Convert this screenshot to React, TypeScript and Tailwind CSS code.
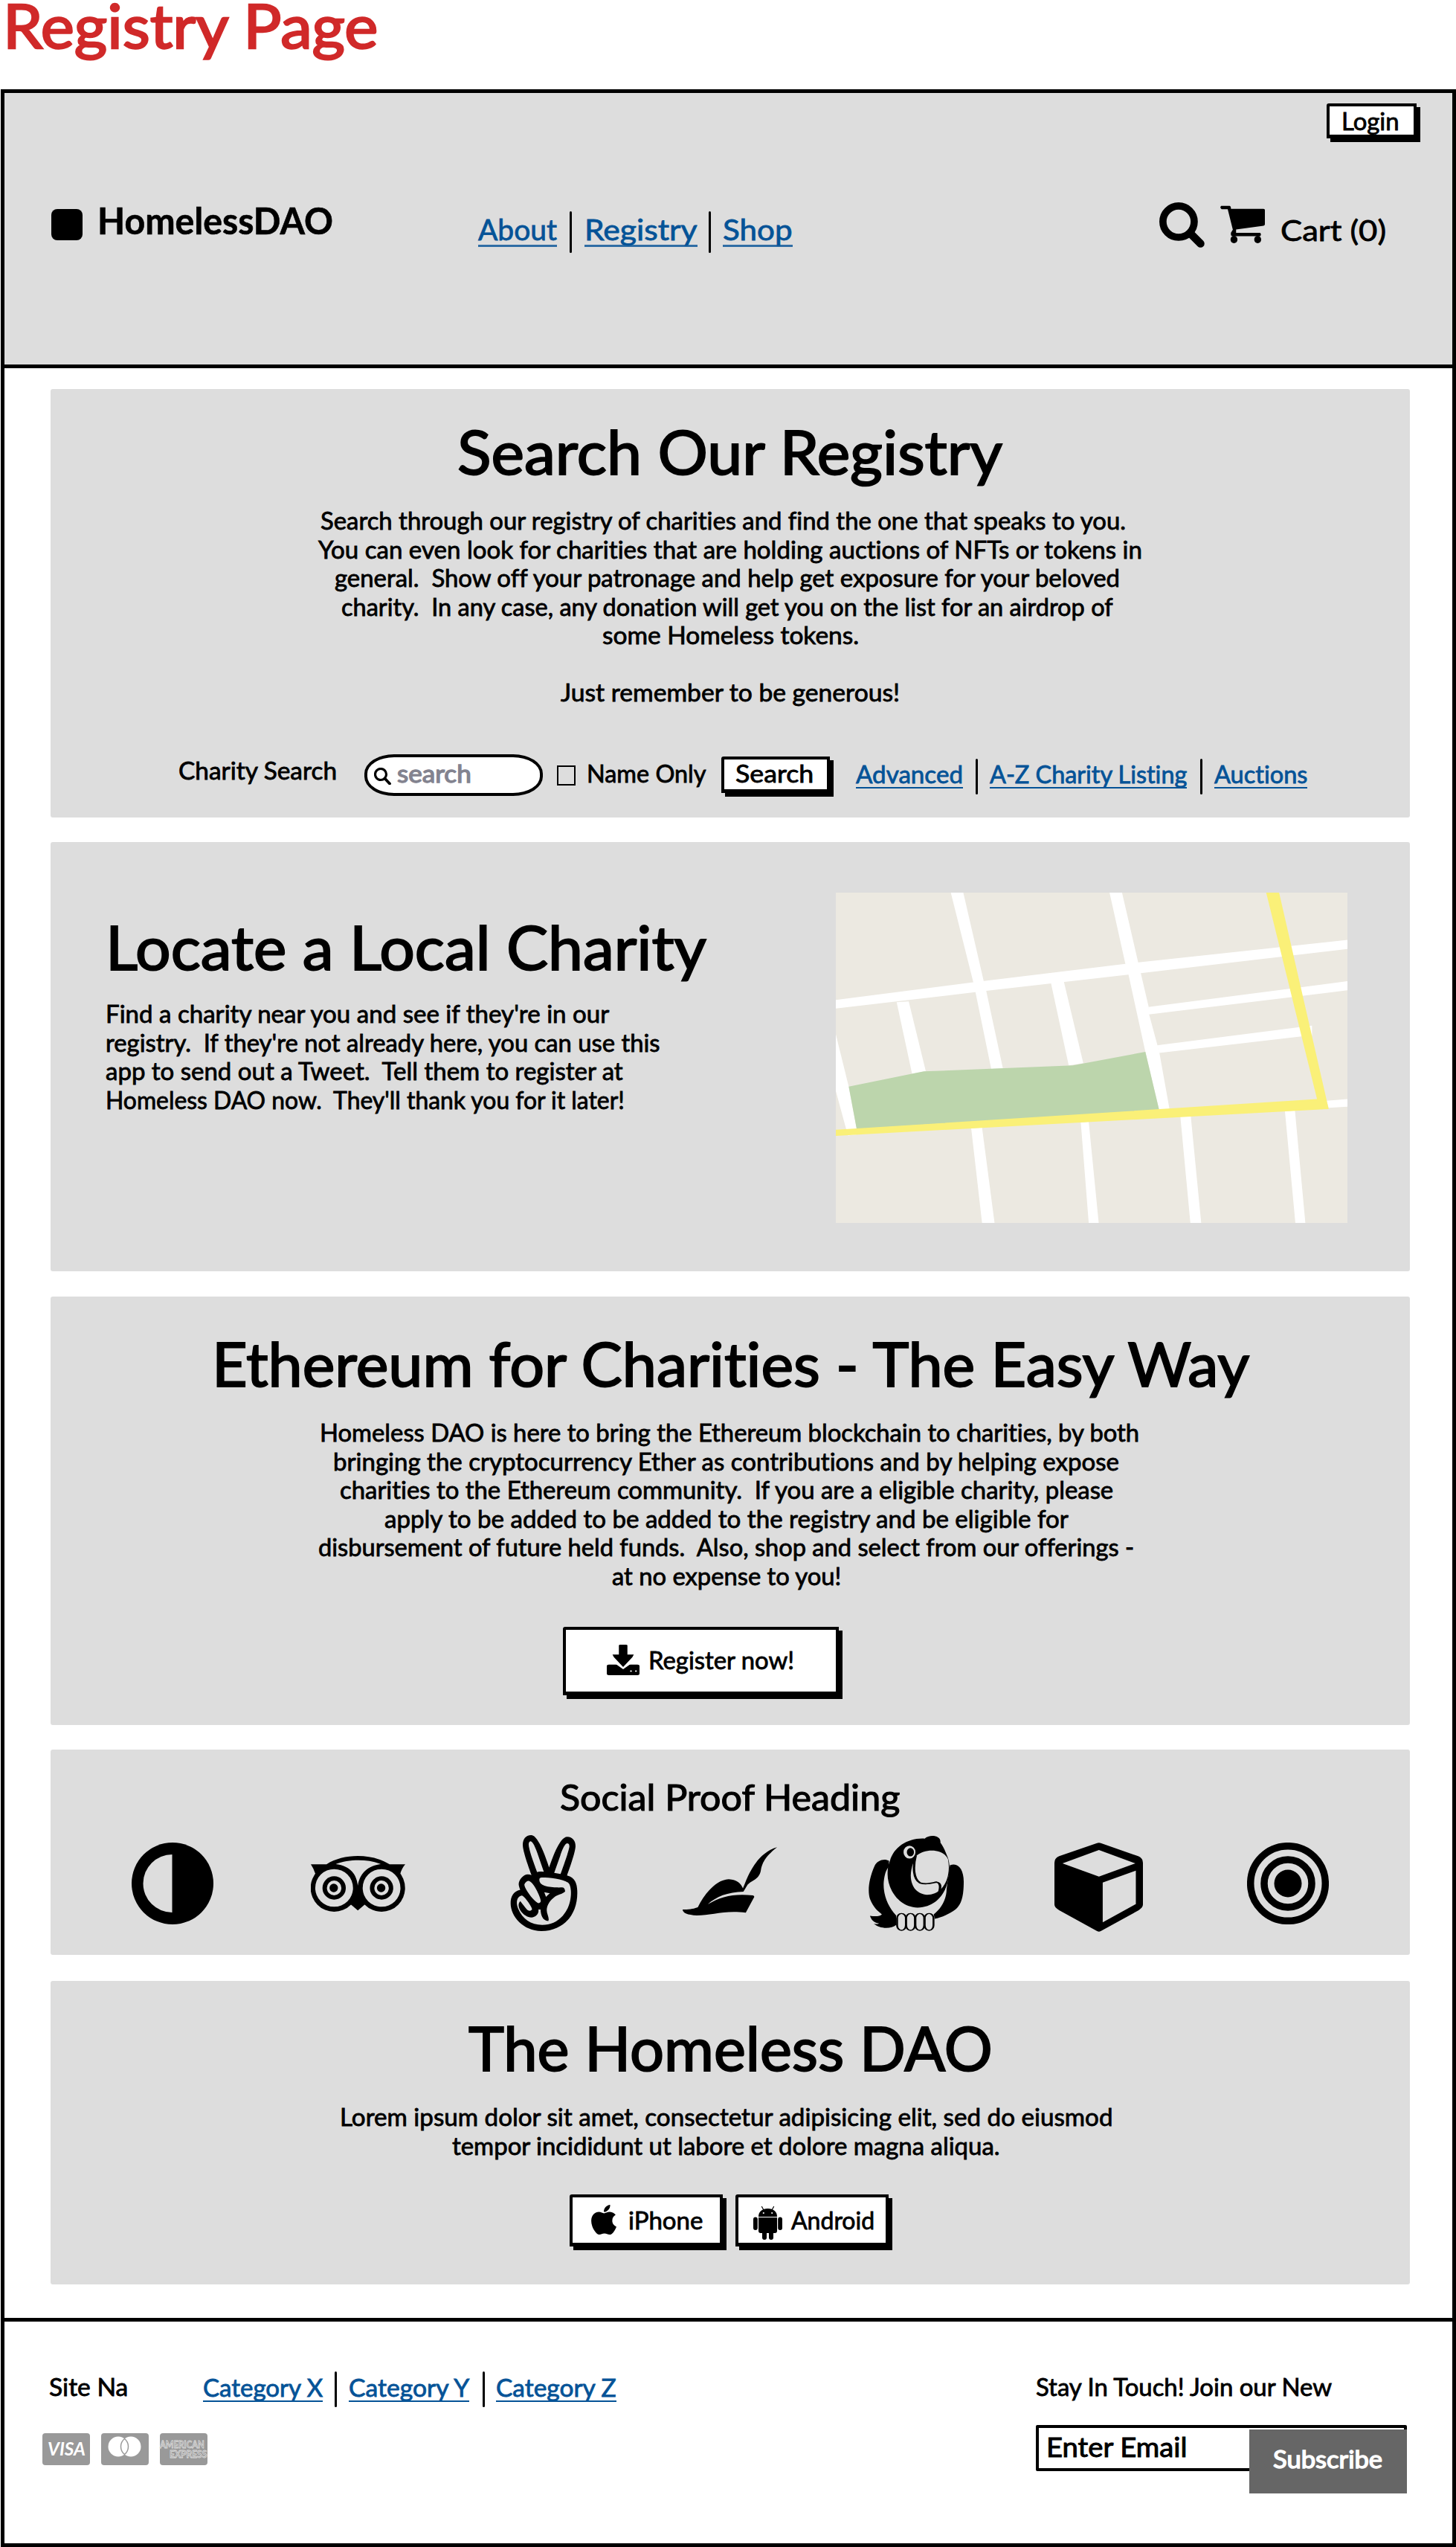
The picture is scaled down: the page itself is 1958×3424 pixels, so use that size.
import { useLayoutEffect, useRef, useState } from "react";
import type { ReactNode } from "react";
import { FaAngellist, FaApple } from "react-icons/fa";

/* A single line of text stretched to exactly fill the width of its box. */
function Fit({ className = "", children }: { className?: string; children: ReactNode }) {
  const box = useRef<HTMLSpanElement>(null);
  const text = useRef<HTMLSpanElement>(null);
  const [scale, setScale] = useState(1);
  useLayoutEffect(() => {
    if (box.current && text.current) {
      setScale(box.current.clientWidth / text.current.offsetWidth);
    }
  }, []);
  return (
    <span ref={box} className={"block shrink-0 whitespace-pre " + className}>
      <span ref={text} className="inline-block origin-left" style={{ transform: `scaleX(${scale})` }}>
        {children}
      </span>
    </span>
  );
}

const H1 = "text-[81px] leading-[96px] [-webkit-text-stroke:2px]";
const BODY = "text-[32px] leading-[38.5px] [-webkit-text-stroke:0.8px]";
const SMALL_LINK =
  "text-[32px] leading-[35px] [-webkit-text-stroke:0.8px] text-[#055397] border-b-2 border-[#055397]";
const NAV_LINK =
  "text-[39px] leading-[42px] [-webkit-text-stroke:0.8px] text-[#055397] border-b-[3px] border-[#055397]/80";

type Line = { t: string; c: string };

function Lines({ lines, className = "" }: { lines: Line[]; className?: string }) {
  return (
    <p className={BODY + " " + className}>
      {lines.map((l, i) => (
        <Fit key={i} className={l.c}>
          {l.t}
        </Fit>
      ))}
    </p>
  );
}

function Section({ className, children }: { className: string; children: ReactNode }) {
  return (
    <section className={"ml-[62px] w-[1828px] shrink-0 rounded-[3px] bg-[#dddddd] " + className}>{children}</section>
  );
}

function Sep({ className }: { className: string }) {
  return <span className={"w-[3px] shrink-0 rounded-full bg-black " + className} />;
}

function Button({ className, children }: { className: string; children: ReactNode }) {
  return (
    <button
      className={
        "flex shrink-0 items-start rounded-tl-[3px] border-[4px] border-b-[5px] border-black bg-white text-left shadow-[5px_5px_0_0_#000] " +
        className
      }
    >
      {children}
    </button>
  );
}

function MapPicture() {
  return (
    <svg className="h-[444px] w-[688px] shrink-0" viewBox="79 105 1228 1160" preserveAspectRatio="none">
      <rect x="79" y="105" width="1228" height="1160" fill="#ece9e1" />
      <g fill="#fff">
        <polygon points="355,105 385,105 434,416 440,450 480,722 452,724 415,460 409,420" />
        <polygon points="736,105 766,105 805,352 811,388 830,507 831,533 851,641 856,670 880,866 855,868 822,664 781,390 774,355" />
        <polygon points="79,482 409,420 774,355 1307,271 1307,303 811,388 440,450 79,512" />
        <polygon points="225,490 254,487 295,733 262,741" />
        <polygon points="595,420 626,415 673,704 638,712" />
        <polygon points="829,507 1307,416 1307,448 830,533" />
        <polygon points="850,641 1193,577 1222,572 1222,606 1197,610 855,668" />
        <polygon points="79,603 110,786 129,933 128,955 108,958 79,802" />
        <polygon points="404,933 430,930 460,1265 430,1265" />
        <polygon points="667,912 686,910 710,1265 686,1265" />
        <polygon points="906,892 931,890 956,1265 930,1265" />
        <polygon points="1157,873 1181,870 1206,1265 1182,1265" />
        <polygon points="1257,836 1307,830 1307,857 1262,861" />
      </g>
      <polygon fill="#bcd5ac" points="110,786 290,733 648,712 822,664 855,868 129,935" />
      <polygon fill="#faf078" points="1112,105 1143,105 1262,865 79,959 79,938 1234,830" />
    </svg>
  );
}

function SearchIcon({ className }: { className: string }) {
  return (
    <svg className={className} viewBox="0 0 60 60" fill="none" stroke="#000">
      <circle cx="25.5" cy="25.5" r="20.7" strokeWidth="9.5" />
      <path d="M42 42L54.5 54.5" strokeWidth="10.5" strokeLinecap="round" />
    </svg>
  );
}

function CartIcon() {
  return (
    <svg className="ml-[21px] mt-[151px] h-[51px] w-[60px] shrink-0" viewBox="1062 529 96 154" preserveAspectRatio="none">
      <path d="M1064 531H1082Q1085 532 1085 543H1155Q1158 543 1158 548V606Q1158 610 1155 612L1096 627V641H1148Q1151 648 1148 654H1088Q1084 654 1085 640L1089 628L1078 545H1065Q1060 538 1064 531Z" />
      <ellipse cx="1091.500" cy="668" rx="7.500" ry="15" />
      <ellipse cx="1142.500" cy="668" rx="7.500" ry="15" />
    </svg>
  );
}

function DownloadIcon() {
  return (
    <svg className="ml-[55px] mt-[20px] h-[41px] w-[44px] shrink-0" viewBox="592 1272 46 112" preserveAspectRatio="none">
      <rect x="592" y="1345" width="46" height="39" rx="3" ry="6" />
      <path d="M602 1338L615 1362L628 1338Z" fill="#fff" />
      <path d="M609 1275Q609 1272 611 1272H619Q621 1272 621 1275V1308H630L628 1318L615 1354L602 1318L600 1308H609Z" />
      <ellipse cx="626" cy="1369" rx="1.300" ry="3" fill="#fff" />
      <ellipse cx="633" cy="1369" rx="1.300" ry="3" fill="#fff" />
    </svg>
  );
}

function AndroidIcon() {
  return (
    <svg className="ml-[20px] mt-[12px] h-[45px] w-[39px] shrink-0" viewBox="0 0 39 45">
      <path d="M11.500 0.500L14 5M27.500 0.500L25 5" stroke="#000" strokeWidth="1.200" strokeLinecap="round" />
      <path d="M7 14C7 7 12 3 19.500 3S32 7 32 14Z" />
      <circle cx="13.800" cy="9" r="1.100" fill="#fff" />
      <circle cx="25.200" cy="9" r="1.100" fill="#fff" />
      <path d="M7 15H32V33Q32 36 29 36H10Q7 36 7 33Z" />
      <rect x="0" y="14.500" width="5.800" height="17.500" rx="2.900" />
      <rect x="33.200" y="14.500" width="5.800" height="17.500" rx="2.900" />
      <rect x="12" y="30" width="6" height="15" rx="3" />
      <rect x="21" y="30" width="6" height="15" rx="3" />
    </svg>
  );
}

function HalfCircleIcon() {
  return (
    <svg className="ml-[109px] mt-[10px] h-[110px] w-[110px] shrink-0" viewBox="0 0 110 110">
      <circle cx="55" cy="55" r="55" />
      <path d="M54.500 16A39 39 0 0 0 54.500 94Z" fill="#ddd" />
    </svg>
  );
}

function OwlIcon() {
  return (
    <svg className="ml-[131px] mt-[28px] h-[75px] w-[127px] shrink-0" viewBox="531 345 235 225" preserveAspectRatio="none">
      <path d="M531 379L570 379C612 334 684 334 727 379L766 379Q757 395 753 420L648 565L543 420Q538 395 531 379Z" />
      {[589, 707].map((x) => (
        <g key={x}>
          <ellipse cx={x} cy="474" rx="58.500" ry="96" />
          <ellipse cx={x} cy="474" rx="47" ry="76" fill="#ddd" />
          <ellipse cx={x} cy="474" rx="29" ry="47" />
          <ellipse cx={x} cy="474" rx="18" ry="30" fill="#ddd" />
          <ellipse cx={x - 1} cy="474" rx="10.500" ry="17" />
        </g>
      ))}
      <path d="M593 378C625 357 675 357 705 378C670 385 652 420 648 465C645 420 630 385 593 378Z" fill="#ddd" />
    </svg>
  );
}

function HatIcon() {
  return (
    <svg className="ml-[129px] mt-[16px] h-[92px] w-[127px] shrink-0" viewBox="60 308 199 277" preserveAspectRatio="none">
      <path d="M92 552C105 500 130 440 157 438C175 440 183 455 187 475C195 440 212 335 259 309C232 350 228 375 225 400C222 440 208 438 197 460L188 489C155 490 130 510 113 540C140 508 170 495 208 504Q211 505 211 510L193 574C150 562 120 585 90 585C70 583 60 575 60 561C75 562 85 557 92 552Z" />
    </svg>
  );
}

function ParrotIcon() {
  return (
    <svg className="ml-[123px] h-[129px] w-[128px] shrink-0" viewBox="452 262 200 388" preserveAspectRatio="none">
      <path d="M495 366C485 354 470 365 465 385C452 440 450 490 455 520C462 555 472 570 480 582Q474 594 455 588C458 605 463 615 474 619Q470 624 463 620C475 642 500 642 510 625L510 587C492 550 482 500 484 450C486 415 490 400 494 392Z" />
      <path d="M497 366C505 310 535 272 570 276C580 258 605 262 603 292C608 305 612 320 618 350C622 370 624 400 620 430C618 480 600 553 555 555C515 553 492 480 492 420C492 395 494 380 497 366Z" />
      <path d="M623 384C640 370 652 400 652 450C652 520 645 545 635 562C622 580 605 597 591 600L589 582C605 560 616 520 616 480Z" />
      <path d="M553 345C570 315 610 315 619 360C626 430 610 503 575 503C545 500 533 440 546 375Z" fill="#ddd" />
      <path d="M551 345C545 390 546 440 560 455C573 463 585 455 595 452C604 455 604 470 600 496" fill="none" stroke="#000" strokeWidth="5" />
      <ellipse cx="538" cy="331" rx="12.500" ry="26" fill="#ddd" />
      <ellipse cx="540" cy="331" rx="7.500" ry="17" />
      {[512, 531, 550.5, 570].map((x) => (
        <rect key={x} x={x} y="579" width="18.500" height="68" rx="9" ry="20" fill="#ddd" stroke="#000" strokeWidth="4" />
      ))}
    </svg>
  );
}

function CubeIcon() {
  return (
    <svg className="ml-[122px] mt-[10px] h-[120px] w-[119px] shrink-0" viewBox="843 290 187 360" preserveAspectRatio="none">
      <path d="M933 292Q937 289 941 292L1020 345Q1030 353 1030 372V540Q1030 552 1021 563L941 647Q937 651 933 647L853 563Q843 552 843 540V372Q843 353 853 345Z" />
      <path d="M937 320L1014 374L937 427L860 374ZM945 451L1015 403V538L945 612Z" fill="#ddd" />
    </svg>
  );
}

function TargetIcon() {
  return (
    <svg className="ml-[140px] mt-[10px] h-[110px] w-[110px] shrink-0" viewBox="0 0 110 110">
      <circle cx="55" cy="55" r="50.300" fill="none" stroke="#000" strokeWidth="9.500" />
      <circle cx="55" cy="55" r="32" fill="none" stroke="#000" strokeWidth="9.500" />
      <circle cx="55" cy="55" r="18.500" />
    </svg>
  );
}

const searchLines: Line[] = [
  { t: "Search through our registry of charities and find the one that speaks to you.", c: "ml-[363px] w-[1083px]" },
  { t: "You can even look for charities that are holding auctions of NFTs or tokens in", c: "ml-[360px] w-[1108px]" },
  { t: "general.  Show off your patronage and help get exposure for your beloved", c: "ml-[382px] w-[1056px]" },
  { t: "charity.  In any case, any donation will get you on the list for an airdrop of", c: "ml-[391px] w-[1038px]" },
  { t: "some Homeless tokens.", c: "ml-[742px] w-[345px]" },
  { t: "Just remember to be generous!", c: "ml-[686px] w-[456px] mt-[38.5px]" },
];

const locateLines: Line[] = [
  { t: "Find a charity near you and see if they're in our", c: "w-[677px]" },
  { t: "registry.  If they're not already here, you can use this", c: "w-[746px]" },
  { t: "app to send out a Tweet.  Tell them to register at", c: "w-[696px]" },
  { t: "Homeless DAO now.  They'll thank you for it later!", c: "w-[698px]" },
];

const ethereumLines: Line[] = [
  { t: "Homeless DAO is here to bring the Ethereum blockchain to charities, by both", c: "ml-[362px] w-[1102px]" },
  { t: "bringing the cryptocurrency Ether as contributions and by helping expose", c: "ml-[380px] w-[1057px]" },
  { t: "charities to the Ethereum community.  If you are a eligible charity, please", c: "ml-[389px] w-[1040px]" },
  { t: "apply to be added to be added to the registry and be eligible for", c: "ml-[449px] w-[920px]" },
  { t: "disbursement of future held funds.  Also, shop and select from our offerings -", c: "ml-[360px] w-[1097px]" },
  { t: "at no expense to you!", c: "ml-[755px] w-[308px]" },
];

const loremLines: Line[] = [
  { t: "Lorem ipsum dolor sit amet, consectetur adipisicing elit, sed do eiusmod", c: "ml-[389px] w-[1040px]" },
  { t: "tempor incididunt ut labore et dolore magna aliqua.", c: "ml-[540px] w-[737px]" },
];

function Header() {
  return (
    <header className="h-[375px] shrink-0 border-y-[5px] border-black bg-[#dddddd]">
      <div className="flex h-0">
        <Button className="ml-[1778px] mt-[14px] h-[47px] w-[121px]">
          <Fit className="ml-[16px] mt-px w-[78px] text-[32px] leading-[38px] [-webkit-text-stroke:0.8px]">Login</Fit>
        </Button>
      </div>
      <div className="flex items-start">
        <span className="ml-[63px] mt-[156px] size-[42px] shrink-0 rounded-[8px] bg-black" />
        <Fit className="ml-[20px] mt-[142px] w-[317px] text-[49px] font-bold leading-[58px] [-webkit-text-stroke:0.6px]">
          HomelessDAO
        </Fit>
        <nav className="ml-[195px] mt-[159px] flex items-start">
          <Fit className={NAV_LINK + " mt-[3px] w-[106px]"}>About</Fit>
          <Sep className="ml-[17px] h-[56px]" />
          <Fit className={NAV_LINK + " ml-[17px] mt-[3px] w-[152px]"}>Registry</Fit>
          <Sep className="ml-[15px] h-[56px]" />
          <Fit className={NAV_LINK + " ml-[16px] mt-[3px] w-[94px]"}>Shop</Fit>
        </nav>
        <SearchIcon className="ml-[493px] mt-[147px] size-[61px] shrink-0" />
        <CartIcon />
        <Fit className="ml-[21px] mt-[163px] w-[142px] text-[39px] leading-[42px] [-webkit-text-stroke:0.8px]">Cart (0)</Fit>
      </div>
    </header>
  );
}

function SearchSection() {
  return (
    <Section className="mt-[28px] h-[576px]">
      <div className="h-[36px]" />
      <h1>
        <Fit className={H1 + " ml-[547px] w-[733px]"}>Search Our Registry</Fit>
      </h1>
      <Lines lines={searchLines} className="mt-[26px]" />
      <div className="mt-[62px] flex h-[60px] items-start">
        <Fit className={BODY + " ml-[172px] mt-[4px] w-[213px]"}>Charity Search</Fit>
        <div className="ml-[37px] mt-px flex h-[56px] w-[240px] shrink-0 items-start rounded-[40px/26px] border-[4px] border-black bg-white">
          <svg className="ml-[9px] mt-[14px] size-[23px] shrink-0" viewBox="0 0 23 23" fill="none" stroke="#000">
            <circle cx="9" cy="9" r="7.500" strokeWidth="3.200" />
            <path d="M14.500 14.500L21 21.500" strokeWidth="3.800" strokeLinecap="round" />
          </svg>
          <Fit className="ml-[8px] mt-[4px] w-[100px] text-[32px] leading-[35px] text-[#83838f] [-webkit-text-stroke:1.3px]">
            search
          </Fit>
        </div>
        <span className="ml-[19px] mt-[16px] h-[27px] w-[25px] shrink-0 border-2 border-black" />
        <Fit className={BODY + " ml-[15px] mt-[8px] w-[160px]"}>Name Only</Fit>
        <Button className="ml-[21px] mt-[4px] h-[49px] w-[146px]">
          <Fit className="ml-[15px] w-[105px] text-[32px] leading-[38px] [-webkit-text-stroke:0.8px]">Search</Fit>
        </Button>
        <Fit className={SMALL_LINK + " ml-[35px] mt-[10px] w-[144px]"}>Advanced</Fit>
        <Sep className="ml-[17px] mt-[7px] h-[48px]" />
        <Fit className={SMALL_LINK + " ml-[16px] mt-[10px] w-[265px]"}>A-Z Charity Listing</Fit>
        <Sep className="ml-[18px] mt-[7px] h-[48px]" />
        <Fit className={SMALL_LINK + " ml-[16px] mt-[10px] w-[125px]"}>Auctions</Fit>
      </div>
    </Section>
  );
}

function Footer() {
  return (
    <footer className="flex h-[308px] shrink-0 items-start border-y-[5px] border-black">
      <div className="ml-[51px] w-[1000px] shrink-0">
        <div className="mt-[67px] flex h-[60px] items-start">
          <Fit className={BODY + " ml-[9px] mt-[2px] w-[106px]"}>Site Na</Fit>
          <Fit className={SMALL_LINK + " ml-[101px] mt-[4px] w-[161px]"}>Category X</Fit>
          <Sep className="ml-[16px] h-[48px]" />
          <Fit className={SMALL_LINK + " ml-[16px] mt-[4px] w-[162px]"}>Category Y</Fit>
          <Sep className="ml-[18px] h-[48px]" />
          <Fit className={SMALL_LINK + " ml-[15px] mt-[4px] w-[162px]"}>Category Z</Fit>
        </div>
        <div className="mt-[23px] flex gap-[15px] text-white">
          <div className="h-[43px] w-[64px] rounded-[4px] bg-[#999999]">
            <Fit className="ml-[7px] w-[51px] text-[24px] font-bold italic leading-[42px]">VISA</Fit>
          </div>
          <div className="flex h-[43px] w-[64px] justify-center rounded-[4px] bg-[#999999]">
            <svg className="mt-[4px] h-[28px] w-[46px]" viewBox="0 0 46 28">
              <circle cx="14" cy="14" r="13.500" fill="#fff" />
              <circle cx="31" cy="14" r="13.500" fill="#fff" />
              <path d="M22.500 3.500A13.500 13.500 0 0 1 22.500 24.500A13.500 13.500 0 0 1 22.500 3.500Z" fill="#fff" stroke="#999" strokeWidth="1.500" />
            </svg>
          </div>
          <div className="h-[43px] w-[64px] rounded-[4px] bg-[#999999] pt-[9px] text-[13px] font-bold leading-[13px] text-[#999999] [-webkit-text-stroke:0.8px_#ddd]">
            <Fit className="w-[60px]">AMERICAN</Fit>
            <Fit className="ml-[13px] w-[50px]">EXPRESS</Fit>
          </div>
        </div>
      </div>
      <div className="ml-[336px] mt-[69px] w-[500px] shrink-0">
        <Fit className={BODY + " w-[398px]"}>Stay In Touch! Join our New</Fit>
        <div className="mt-[31px] flex h-[62px] w-[499px] items-start rounded-[2px] border-[4px] border-black">
          <Fit className="ml-[10px] mt-[3px] w-[189px] shrink-0 text-[36px] leading-[44px] [-webkit-text-stroke:1px]">
            Enter Email
          </Fit>
          <button className="ml-[84px] mt-[2px] flex h-[86px] w-[212px] shrink-0 items-start bg-[#666666] text-left text-white">
            <Fit className="ml-[32px] mt-[21px] w-[147px] text-[32px] leading-[38px] [-webkit-text-stroke:1.4px]">Subscribe</Fit>
          </button>
        </div>
      </div>
    </footer>
  );
}

export default function App() {
  return (
    <div className="flex h-[3424px] w-[1958px] flex-col bg-white font-['Lato',sans-serif] text-black [font-variant-ligatures:none]">
      <div className="h-[120px] shrink-0">
        <Fit className="ml-[4px] w-[504px] text-[81px] leading-[68px] text-[#d02929] [-webkit-text-stroke:2.4px]">
          Registry Page
        </Fit>
      </div>
      <div className="ml-px flex h-[3304px] w-[1957px] flex-col border-x-[5px] border-black">
        <Header />
        <SearchSection />

        <Section className="mt-[33px] flex h-[577px] items-start">
          <div className="ml-[74px] mt-[93px] w-[982px] shrink-0">
            <h2>
              <Fit className={H1 + " w-[808px]"}>Locate a Local Charity</Fit>
            </h2>
            <Lines lines={locateLines} className="mt-[23px]" />
          </div>
          <div className="mt-[68px]">
            <MapPicture />
          </div>
        </Section>

        <Section className="mt-[34px] h-[576px]">
          <div className="h-[42px]" />
          <h2>
            <Fit className={H1 + " ml-[217px] w-[1395px]"}>Ethereum for Charities - The Easy Way</Fit>
          </h2>
          <Lines lines={ethereumLines} className="mt-[26px]" />
          <Button className="ml-[689px] mt-[49px] h-[92px] w-[371px]">
            <DownloadIcon />
            <Fit className="ml-[12px] mt-[22px] w-[196px] text-[32px] leading-[38px] [-webkit-text-stroke:0.8px]">
              Register now!
            </Fit>
          </Button>
        </Section>

        <Section className="mt-[33px] h-[276px]">
          <div className="h-[35px]" />
          <h3>
            <Fit className="ml-[685px] w-[457px] text-[48px] leading-[58px] [-webkit-text-stroke:1.200px]">Social Proof Heading</Fit>
          </h3>
          <div className="mt-[22px] flex items-start">
            <HalfCircleIcon />
            <OwlIcon />
            <FaAngellist className="ml-[130px] mr-px h-[129px] w-[113px] shrink-0" />
            <HatIcon />
            <ParrotIcon />
            <CubeIcon />
            <TargetIcon />
          </div>
        </Section>

        <Section className="mt-[35px] h-[408px]">
          <div className="h-[42px]" />
          <h2>
            <Fit className={H1 + " ml-[562px] w-[705px]"}>The Homeless DAO</Fit>
          </h2>
          <Lines lines={loremLines} className="mt-[26px]" />
          <div className="mt-[46px] flex gap-[17px] pl-[698px]">
            <Button className="h-[70px] w-[206px]">
              <FaApple className="ml-[21px] mt-[7px] h-[46px] w-[42px] shrink-0" />
              <Fit className="ml-[12px] mt-[12px] w-[100px] text-[32px] leading-[38px] [-webkit-text-stroke:0.8px]">iPhone</Fit>
            </Button>
            <Button className="h-[70px] w-[206px]">
              <AndroidIcon />
              <Fit className="ml-[12px] mt-[12px] w-[112px] text-[32px] leading-[38px] [-webkit-text-stroke:0.8px]">Android</Fit>
            </Button>
          </div>
        </Section>

        <div className="h-[45px] shrink-0" />
        <Footer />
      </div>
    </div>
  );
}
